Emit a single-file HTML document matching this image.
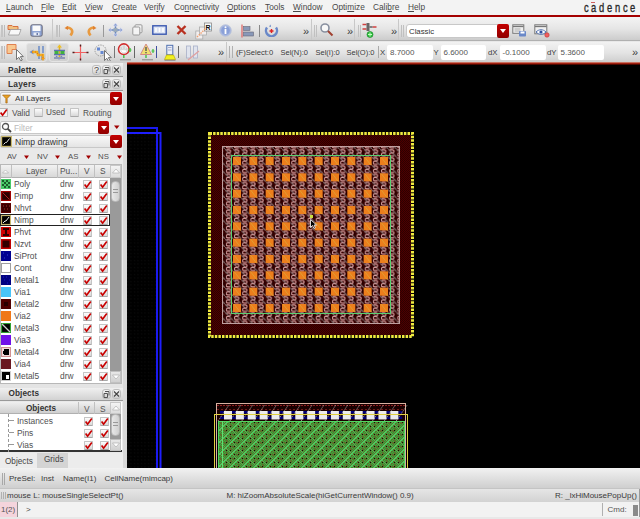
<!DOCTYPE html>
<html><head><meta charset="utf-8">
<style>
*{margin:0;padding:0;box-sizing:border-box}
html,body{width:640px;height:519px;overflow:hidden;background:#e8e8e8;font-family:"Liberation Sans",sans-serif;color:#333}
.a{position:absolute}
.t{position:absolute;white-space:pre;line-height:1}
#menu{left:0;top:0;width:640px;height:15px;background:#f3f3f3}
#menu .t{font-size:8.3px;top:3px;color:#484848}
#menu u{text-decoration-thickness:1px;text-underline-offset:1px}
#redl{left:0;top:15px;width:640px;height:2px;background:#a40000}
.tb{background:linear-gradient(#f4f4f4,#e6e6e6 40%,#d4d4d4)}
.grip{position:absolute;width:1px;background:#a8a8a8}
.sep{position:absolute;width:1px;background:#777}
.fld{position:absolute;background:#fff;border-radius:2px}
.rbtn{position:absolute;background:linear-gradient(#c40000,#900000);border-radius:2px}
.rbtn:after{content:"";position:absolute;left:50%;top:50%;margin:-2px 0 0 -3px;border-left:3px solid transparent;border-right:3px solid transparent;border-top:4px solid #fff}
.chev{position:absolute;font-size:11px;line-height:1;color:#404040;font-weight:normal}
.hdr{position:absolute;background:linear-gradient(#f0f0f0,#d2d2d2);border-bottom:1px solid #9a9a9a}
.hb{position:absolute;width:9px;height:10px;border-radius:3px;background:linear-gradient(#f4f4f4,#d0d0d0);border:1px solid #bcbcbc;font-size:8px;line-height:8px;text-align:center;color:#555}
.ck{position:absolute;width:9px;height:9px;background:linear-gradient(#fdfdfd,#d8d8d8);border:1px solid #c4c4c4;border-bottom-color:#a8a8a8;border-radius:1px}
.ck svg{position:absolute;left:-1px;top:-1px}
.lt{font-size:8.4px;color:#505050}
</style></head><body>
<!-- MENU -->
<div id="menu" class="a">
<span class="t" style="left:6px"><u>L</u>aunch</span>
<span class="t" style="left:41px"><u>F</u>ile</span>
<span class="t" style="left:62px"><u>E</u>dit</span>
<span class="t" style="left:85px"><u>V</u>iew</span>
<span class="t" style="left:112px"><u>C</u>reate</span>
<span class="t" style="left:144px">Ver<u>i</u>fy</span>
<span class="t" style="left:174px">Co<u>n</u>nectivity</span>
<span class="t" style="left:227px"><u>O</u>ptions</span>
<span class="t" style="left:265px"><u>T</u>ools</span>
<span class="t" style="left:293px"><u>W</u>indow</span>
<span class="t" style="left:332px">Opti<u>m</u>ize</span>
<span class="t" style="left:373px">Cali<u>b</u>re</span>
<span class="t" style="left:408px"><u>H</u>elp</span>
<span class="t" style="left:583.5px;top:1px;font-size:13px;color:#282828;-webkit-text-stroke:0.35px #282828;transform:scaleX(0.72);transform-origin:0 0">c</span><span class="t" style="left:590.5px;top:1px;font-size:13px;color:#282828;-webkit-text-stroke:0.35px #282828;transform:scaleX(0.72);transform-origin:0 0">a</span><span class="t" style="left:598.5px;top:1px;font-size:13px;color:#282828;-webkit-text-stroke:0.35px #282828;transform:scaleX(0.72);transform-origin:0 0">d</span><span class="t" style="left:606.5px;top:1px;font-size:13px;color:#282828;-webkit-text-stroke:0.35px #282828;transform:scaleX(0.72);transform-origin:0 0">e</span><span class="t" style="left:614.5px;top:1px;font-size:13px;color:#282828;-webkit-text-stroke:0.35px #282828;transform:scaleX(0.72);transform-origin:0 0">n</span><span class="t" style="left:622.5px;top:1px;font-size:13px;color:#282828;-webkit-text-stroke:0.35px #282828;transform:scaleX(0.72);transform-origin:0 0">c</span><span class="t" style="left:629.5px;top:1px;font-size:13px;color:#282828;-webkit-text-stroke:0.35px #282828;transform:scaleX(0.72);transform-origin:0 0">e</span><div class="a" style="left:591px;top:2px;width:4px;height:1px;background:#d06060"></div>
</div>
<div id="redl" class="a"></div>

<!-- TOOLBAR 1 -->
<div class="a" style="left:0;top:17px;width:640px;height:24px;background:linear-gradient(#f4f4f4,#e6e6e6 50%,#cccccc);border-bottom:1px solid #b0b0b0"></div>
<div class="a" style="left:52px;top:19px;width:1px;height:21px;background:#c8c8c8"></div>
<div class="a" style="left:311px;top:19px;width:1px;height:21px;background:#c8c8c8"></div>
<div class="a" style="left:354px;top:19px;width:1px;height:21px;background:#c8c8c8"></div>
<div class="a" style="left:398px;top:19px;width:1px;height:21px;background:#c8c8c8"></div>
<div class="grip" style="left:1px;top:25px;height:12px;width:2px;background:#c4c4c4"></div><div class="grip" style="left:4px;top:25px;height:12px;width:1px;background:#bbb"></div>
<div class="grip" style="left:56px;top:25px;height:12px;width:2px;background:#c4c4c4"></div><div class="grip" style="left:59px;top:25px;height:12px;width:1px;background:#bbb"></div>
<div class="grip" style="left:314px;top:25px;height:12px;width:1px;background:#c0c0c0"></div><div class="grip" style="left:316px;top:25px;height:12px;width:1px;background:#c0c0c0"></div>
<div class="grip" style="left:358px;top:25px;height:12px;width:1px;background:#c0c0c0"></div><div class="grip" style="left:360px;top:25px;height:12px;width:1px;background:#c0c0c0"></div>
<div class="grip" style="left:401px;top:25px;height:12px;width:1px;background:#c0c0c0"></div><div class="grip" style="left:403px;top:25px;height:12px;width:1px;background:#c0c0c0"></div>
<!-- folder -->
<svg class="a" style="left:7px;top:23px" width="15" height="13"><path d="M1 2.5h4l1 1h5v3H1z" fill="#f0c080" stroke="#d87040" stroke-width="1"/><path d="M1.5 12L3.5 6.5H14L12 12z" fill="#f8f8f8" stroke="#999" stroke-width="0.8"/></svg>
<!-- save -->
<svg class="a" style="left:30px;top:24px" width="13" height="13"><rect x="0.8" y="0.8" width="11.4" height="11.4" rx="1.5" fill="#8ea4d4" stroke="#6a6a78" stroke-width="1"/><rect x="2.5" y="1.5" width="8" height="5.5" fill="#fafafa"/><rect x="3.5" y="8.5" width="6" height="3" fill="#e8ecf4"/><rect x="6.5" y="9" width="1.5" height="2" fill="#6a7aa8"/></svg>
<!-- undo redo -->
<svg class="a" style="left:64px;top:26px" width="11" height="11"><path d="M2.5 1.5 C8 2 10 5 6.5 9.5" stroke="#e89a40" stroke-width="2.6" fill="none"/><path d="M0.5 2L4 0V4z" fill="#e08030"/></svg>
<svg class="a" style="left:86px;top:26px" width="11" height="11"><path d="M8.5 1.5 C3 2 1 5 4.5 9.5" stroke="#e89a40" stroke-width="2.6" fill="none"/><path d="M10.5 2L7 0V4z" fill="#e08030"/></svg>
<div class="sep" style="left:103px;top:25px;height:12px;background:#999"></div>
<!-- move -->
<svg class="a" style="left:108px;top:23px" width="15" height="14"><path d="M7.5 1V13M1 7H14" stroke="#6a88c0" stroke-width="1.6"/><path d="M7.5 0L5 3h5zM7.5 14L5 11h5zM0 7l3-2.5v5zM15 7l-3-2.5v5z" fill="#8aa0d0" stroke="#e8e8f8" stroke-width="0.6"/><rect x="5.5" y="5" width="4" height="4" fill="#9ab"/></svg>
<!-- copy -->
<svg class="a" style="left:132px;top:24px" width="11" height="12"><rect x="3" y="0.8" width="7" height="8" rx="1" fill="#f4f4f4" stroke="#999"/><rect x="0.8" y="3" width="7" height="8" rx="1" fill="#f4f4f4" stroke="#999"/></svg>
<!-- stretch -->
<svg class="a" style="left:152px;top:25px" width="15" height="10"><rect x="0.8" y="0.8" width="13.4" height="8.4" fill="#dde4f4" stroke="#3a58b0" stroke-width="1.4"/><path d="M4 3v4M7.5 3v4M11 3v4" stroke="#fff" stroke-width="1.5"/></svg>
<!-- red X -->
<svg class="a" style="left:176px;top:25px" width="11" height="10"><path d="M1.5 1L9.5 9M9.5 1L1.5 9" stroke="#b83020" stroke-width="2.4"/></svg>
<!-- stack -->
<svg class="a" style="left:195px;top:22px" width="18" height="18"><rect x="0.8" y="9" width="7" height="8" fill="#f2eeee" stroke="#aaa" stroke-width="0.8"/><rect x="4.5" y="5" width="7" height="8" fill="#f2eeee" stroke="#aaa" stroke-width="0.8"/><rect x="9.5" y="1" width="7" height="8" fill="#f8f8f8" stroke="#888" stroke-width="0.8"/><text x="10.5" y="8" font-size="7" font-weight="bold" fill="#111" font-family="Liberation Sans">R</text><path d="M2 15L11 6" stroke="#f0a070" stroke-width="1.4" stroke-dasharray="1.5 1"/></svg>
<!-- info -->
<svg class="a" style="left:219px;top:24px" width="13" height="13"><circle cx="6.5" cy="6.5" r="5.8" fill="#a8b8e0" stroke="#b8c0d8" stroke-width="0.8"/><circle cx="6.5" cy="6.5" r="4.3" fill="#8aa0d8"/><rect x="5.6" y="5" width="1.8" height="5" fill="#fff"/><circle cx="6.5" cy="3.3" r="1" fill="#fff"/></svg>
<!-- align -->
<svg class="a" style="left:241px;top:24px" width="13" height="14"><path d="M1 0.5V13.5" stroke="#e06060" stroke-width="1.2"/><rect x="2.5" y="2.5" width="6.5" height="4" fill="#8898b8" stroke="#667" stroke-width="0.6"/><rect x="2.5" y="8" width="10" height="4" fill="#8898b8" stroke="#667" stroke-width="0.6"/></svg>
<div class="sep" style="left:259px;top:25px;height:12px;background:#888"></div>
<!-- refresh -->
<svg class="a" style="left:264px;top:24px" width="15" height="13"><path d="M3 3.5A5.5 5.5 0 1 0 12 3.5" stroke="#6a88c8" stroke-width="2.4" fill="none"/><path d="M5 2.5l1.5-2 .5 2.5z" fill="#6a88c8"/><path d="M7.5 5v4M5.5 7h4" stroke="#e02020" stroke-width="1.4"/></svg>
<span class="chev" style="left:303px;top:26px">»</span>
<!-- zoom -->
<svg class="a" style="left:320px;top:23px" width="14" height="14"><circle cx="5" cy="5" r="4" fill="#f8f8f8" stroke="#8890a0" stroke-width="1.6"/><path d="M8 8L12.5 12.5" stroke="#a04030" stroke-width="2"/></svg>
<span class="chev" style="left:347px;top:26px">»</span>
<!-- netlist -->
<svg class="a" style="left:362px;top:22px" width="16" height="16"><path d="M0.5 2.5h4M0.5 7h4M10.5 5h4" stroke="#d04040" stroke-width="1.6"/><rect x="4.5" y="1" width="3" height="8" fill="#666"/><path d="M7.5 5h3" stroke="#555" stroke-width="1.4"/><circle cx="8" cy="12.5" r="3" fill="#30c040" stroke="#108020" stroke-width="0.6"/><path d="M8 10.5v4M6 12.5h4" stroke="#c0ffc0" stroke-width="1"/></svg>
<span class="chev" style="left:391px;top:26px">»</span>
<!-- combo classic -->
<div class="a" style="left:406px;top:24px;width:103px;height:14px;background:#fff;border:1px solid #c8c8c8;border-radius:3px"></div>
<span class="t" style="left:409px;top:27.5px;font-size:7.8px;color:#333">Classic</span>
<div class="rbtn" style="left:497px;top:24px;width:12px;height:14px"></div>
<!-- icon A -->
<svg class="a" style="left:512px;top:24px" width="15" height="13"><rect x="0.8" y="0.8" width="11" height="8.5" fill="#f0f0f0" stroke="#777" stroke-width="1"/><path d="M1 2.5h10.5" stroke="#777" stroke-width="1.3"/><path d="M2.5 5h6M2.5 7h6" stroke="#999" stroke-width="0.8"/><rect x="7" y="7" width="7" height="5.5" rx="0.8" fill="#6a88c8"/><rect x="8.5" y="7.5" width="4" height="2" fill="#fff"/></svg>
<!-- icon B -->
<svg class="a" style="left:534px;top:24px" width="16" height="14"><rect x="0.8" y="0.8" width="12" height="9" fill="#f0f0f0" stroke="#777" stroke-width="1"/><path d="M1 2.5h11.5" stroke="#777" stroke-width="1.3"/><path d="M2 8C5 5 9 5 12 8C9 11 5 11 2 8z" fill="#fff" stroke="#5070b0" stroke-width="1"/><circle cx="7" cy="8" r="1.6" fill="#3050a0"/><circle cx="13" cy="11" r="2.2" fill="#f06060" stroke="#c03030" stroke-width="0.6"/></svg>

<!-- TOOLBAR 2 -->
<div class="a" style="left:0;top:42px;width:640px;height:21px;background:linear-gradient(#f2f2f2,#e4e4e4 50%,#cccccc)"></div>
<div class="a" style="left:226px;top:42px;width:1px;height:20px;background:#c8c8c8"></div>
<div class="grip" style="left:1px;top:46px;height:13px;width:2px;background:#c4c4c4"></div><div class="grip" style="left:4px;top:46px;height:13px;width:1px;background:#bbb"></div>
<div class="grip" style="left:229px;top:46px;height:12px;width:1px;background:#b0b0b0"></div><div class="grip" style="left:232px;top:46px;height:12px;width:1px;background:#b0b0b0"></div>
<!-- select -->
<svg class="a" style="left:6px;top:43px" width="18" height="18"><path d="M1 1.5h9v5h-4v4h-5z" fill="#f8c890" stroke="#e08050" stroke-width="1"/><path d="M10.5 6.5v10l2.3-2.2 2 3.5 1.5-.8-2-3.4h3z" fill="#fff" stroke="#555" stroke-width="0.8"/></svg>
<div class="a" style="left:26px;top:43px;width:21px;height:19px;background:linear-gradient(#dadada,#cfcfcf);border:1px solid #e4e4e4;border-radius:3px"></div>
<div class="a" style="left:49px;top:43px;width:20px;height:19px;background:linear-gradient(#dadada,#cfcfcf);border:1px solid #e4e4e4;border-radius:3px"></div>
<svg class="a" style="left:29px;top:45px" width="17" height="16"><path d="M10 1v7M14 1v7M10 8v6M13 9v6" stroke="#7090c8" stroke-width="1.6"/><path d="M0.5 7l4-2.5v5z" fill="#7090c8"/><path d="M3 7h5l1 3h5v4" stroke="#f0b020" stroke-width="2.4" fill="none"/><path d="M3 7h5l1 3h5v4" stroke="#e05020" stroke-width="0.8" stroke-dasharray="1 2" fill="none"/><path d="M12 13l2 3 2-3z" fill="#f0a020"/></svg>
<svg class="a" style="left:53px;top:44px" width="13" height="17"><path d="M6.5 0.5L4 3.5h5z" fill="#f0c020"/><path d="M6.5 3v12" stroke="#e0b020" stroke-width="1.6"/><path d="M1 6.5h11M1 10.5h11" stroke="#6070b0" stroke-width="1.4"/><rect x="1.5" y="7" width="4" height="3" fill="#40b040"/><rect x="7.5" y="7" width="4" height="3" fill="#40b040"/><path d="M3 12l3 3 3-3" stroke="#7080c0" stroke-width="1.2" fill="none"/><rect x="1" y="13" width="11" height="2" fill="#9098b8"/></svg>
<!-- crosshair -->
<svg class="a" style="left:72px;top:44px" width="17" height="17"><path d="M1 8.5H16M8.5 1V16" stroke="#f06060" stroke-width="1.2"/><path d="M0.5 8.5H2.5M14.5 8.5H16.5M8.5 0.5V2.5M8.5 14.5V16.5" stroke="#502020" stroke-width="1.4"/></svg>
<!-- selection circle -->
<svg class="a" style="left:94px;top:44px" width="18" height="17"><circle cx="6.5" cy="6.5" r="5.5" fill="none" stroke="#999" stroke-width="1" stroke-dasharray="1.5 1"/><rect x="3" y="3.5" width="3" height="3" fill="#6688d0"/><rect x="6.5" y="7" width="3" height="3" fill="#6688d0"/><path d="M10.5 6.5v10l2.3-2.2 2 3.5 1.5-.8-2-3.4h3z" fill="#fff" stroke="#555" stroke-width="0.8"/></svg>
<div class="sep" style="left:114px;top:46px;height:12px;background:#777"></div>
<!-- no entry -->
<svg class="a" style="left:117px;top:43px" width="16" height="18"><circle cx="6.8" cy="6.2" r="5.3" fill="#fff" stroke="#d03030" stroke-width="1.6"/><path d="M3.8 6.5V4.8M5.4 6V3.2M7 6V2.8M8.6 6V3.4M10 7V5.4" stroke="#b8b8b8" stroke-width="1.5" stroke-linecap="round"/><path d="M3.8 6.5V4.8M5.4 6V3.2M7 6V2.8M8.6 6V3.4M10 7V5.4" stroke="#fff" stroke-width="0.7" stroke-linecap="round"/><path d="M3.5 6.5Q4 10 7 10Q10 10 10 7z" fill="#fff" stroke="#c0c0c0" stroke-width="0.5"/><path d="M13 5v4" stroke="#40c040" stroke-width="1.4"/><path d="M11.5 7h3" stroke="#40c040" stroke-width="1"/><path d="M6.8 12v3" stroke="#40c040" stroke-width="1.4"/><path d="M3 16.8h11" stroke="#888" stroke-width="1"/></svg>
<div class="sep" style="left:134px;top:46px;height:12px;background:#666"></div>
<!-- warning -->
<svg class="a" style="left:140px;top:43px" width="16" height="18"><path d="M6 1L11.5 11.5H0.5z" fill="#f0e070" stroke="#d08080" stroke-width="0.9"/><rect x="5.3" y="4" width="1.4" height="4" fill="#555"/><rect x="5.3" y="9" width="1.4" height="1.3" fill="#555"/><path d="M13 6v4M11.5 8h3" stroke="#40c040" stroke-width="1.2"/><path d="M6 12v3" stroke="#40c040" stroke-width="1.4"/><path d="M2 16.8h11" stroke="#888" stroke-width="1"/></svg>
<div class="sep" style="left:156px;top:46px;height:12px;background:#4050a0"></div>
<!-- yellow device -->
<svg class="a" style="left:164px;top:44px" width="12" height="17"><rect x="2.8" y="1.3" width="6" height="9.5" fill="#e8eef8" stroke="#5070b0" stroke-width="1"/><path d="M4 3.5h3.5M4 6h3.5" stroke="#99b" stroke-width="0.8"/><path d="M2.5 11h7l2 4.5H0.5z" fill="#f0f020" stroke="#c0b000" stroke-width="0.7"/><path d="M0.5 16.3h11" stroke="#888" stroke-width="0.9"/></svg>
<div class="sep" style="left:178px;top:46px;height:12px;background:#666"></div>
<!-- grayed -->
<svg class="a" style="left:185px;top:45px" width="15" height="16"><rect x="1.5" y="1" width="4" height="12" fill="#e0e4ee" stroke="#a8b0c8" stroke-width="0.8"/><rect x="8.5" y="1" width="4" height="12" fill="#e0e4ee" stroke="#a8b0c8" stroke-width="0.8"/><path d="M3 15L14 6" stroke="#e0a0a0" stroke-width="1.3"/></svg>
<span class="chev" style="left:218px;top:47px">»</span>
<span class="t" style="left:236px;top:49px;font-size:7.6px;color:#3a3a3a">(F)Select:0</span>
<span class="t" style="left:280.5px;top:49px;font-size:7.5px;color:#3a3a3a">Sel(N):0</span>
<span class="t" style="left:315.5px;top:49px;font-size:7.5px;color:#3a3a3a">Sel(I):0</span>
<span class="t" style="left:346.5px;top:49px;font-size:7.5px;color:#3a3a3a">Sel(O):0</span>
<div class="sep" style="left:378px;top:46px;height:12px;background:#aaa"></div>
<span class="t" style="left:380px;top:49px;font-size:7.8px;color:#3a3a3a">X</span>
<div class="fld" style="left:387px;top:45px;width:46px;height:15px"></div>
<span class="t" style="left:390px;top:49px;font-size:8px;color:#555">8.7000</span>
<span class="t" style="left:433.5px;top:49px;font-size:7.8px;color:#3a3a3a">Y</span>
<div class="fld" style="left:441px;top:45px;width:45px;height:15px"></div>
<span class="t" style="left:443.5px;top:49px;font-size:8px;color:#555">6.6000</span>
<span class="t" style="left:488px;top:49px;font-size:7.8px;color:#3a3a3a">dX</span>
<div class="fld" style="left:499.5px;top:45px;width:46px;height:15px"></div>
<span class="t" style="left:502.5px;top:49px;font-size:8px;color:#555">-0.1000</span>
<span class="t" style="left:547px;top:49px;font-size:7.8px;color:#3a3a3a">dY</span>
<div class="fld" style="left:558px;top:45px;width:46px;height:15px"></div>
<span class="t" style="left:560.5px;top:49px;font-size:8px;color:#555">5.3600</span>
<span class="chev" style="left:632px;top:47px">»</span>


<div class="a" style="left:127px;top:62px;width:513px;height:1px;background:#c87060"></div>
<!-- LEFT PANEL -->
<div class="a" style="left:0;top:63px;width:123px;height:390px;background:#e9e9e9"></div>
<div class="a" style="left:123px;top:63px;width:4px;height:405px;background:#d8d8d8"></div>

<!-- PALETTE -->
<div class="hdr" style="left:0;top:63px;width:123px;height:14px"></div>
<span class="t" style="left:8px;top:66px;font-size:8.4px;font-weight:bold;color:#333;letter-spacing:0.1px">Palette</span>
<div class="hb" style="left:92px;top:65px;font-size:9px;color:#444">?</div>
<div class="hb" style="left:102px;top:65px"><svg width="7" height="8" style="position:absolute;left:0;top:0"><path d="M2 1.5h4v4M1 3.5h3.5v4h-3.5z" stroke="#555" fill="none" stroke-width="1"/></svg></div>
<div class="hb" style="left:112px;top:65px"><svg width="7" height="8" style="position:absolute;left:0;top:0"><path d="M1 1.5L6 6.5M6 1.5L1 6.5" stroke="#444" stroke-width="1.1"/></svg></div>
<div class="hdr" style="left:0;top:78px;width:123px;height:13px"></div>
<span class="t" style="left:8px;top:80px;font-size:8.4px;font-weight:bold;color:#333;letter-spacing:0.2px">Layers</span>
<div class="hb" style="left:102px;top:79px"><svg width="7" height="8" style="position:absolute;left:0;top:0"><path d="M2 1.5h4v4M1 3.5h3.5v4h-3.5z" stroke="#555" fill="none" stroke-width="1"/></svg></div>
<div class="hb" style="left:112px;top:79px"><svg width="7" height="8" style="position:absolute;left:0;top:0"><path d="M1 1.5L6 6.5M6 1.5L1 6.5" stroke="#444" stroke-width="1.1"/></svg></div>
<!-- all layers combo -->
<div class="a" style="left:0;top:92px;width:122px;height:13px;background:linear-gradient(#f8f8f8,#e4e4e4);border:1px solid #c8c8c8;border-radius:2px"></div>
<svg class="a" style="left:2px;top:94px" width="9" height="10"><path d="M0.5 1H8.5L5.2 4.5V9H3.8V4.5Z" fill="#e8a020" stroke="#a06010" stroke-width="0.6"/></svg>
<span class="t" style="left:15px;top:95px;font-size:8.1px;color:#333">All Layers</span>
<div class="rbtn" style="left:110px;top:92px;width:12px;height:13px"></div>
<!-- valid used routing -->
<svg class="a" style="left:0;top:108px" width="9" height="9"><rect x="-1" y="0.5" width="8.5" height="8" fill="#f4f4f4" stroke="#b8b8b8"/><path d="M0.6 4.6L2.6 7.2L6.8 1.6" stroke="#c80000" stroke-width="1.7" fill="none"/></svg>
<span class="t" style="left:12px;top:109px;font-size:8.4px;color:#505050">Valid</span>
<div class="ck" style="left:34px;top:108px"></div>
<span class="t" style="left:46px;top:109px;font-size:8.2px;color:#505050">Used</span>
<div class="ck" style="left:70px;top:108px"></div>
<span class="t" style="left:83px;top:109px;font-size:8.3px;color:#505050">Routing</span>
<!-- filter -->
<div class="a" style="left:0;top:121px;width:109px;height:13px;background:#fff;border:1px solid #c8c8c8;border-radius:2px"></div>
<svg class="a" style="left:1px;top:122px" width="11" height="11"><circle cx="4.5" cy="4.5" r="3" stroke="#555" stroke-width="1.3" fill="none"/><path d="M6.8 6.8L10 10" stroke="#444" stroke-width="1.8"/></svg>
<span class="t" style="left:14px;top:124px;font-size:8.4px;color:#bbb">Filter</span>
<div class="rbtn" style="left:98px;top:121px;width:11px;height:13px"></div>
<svg class="a" style="left:114px;top:125px" width="6" height="5"><path d="M0 0.5H5.5L2.75 4Z" fill="#a00000"/></svg>
<!-- Nimp drawing -->
<div class="a" style="left:0;top:135px;width:122px;height:13px;background:linear-gradient(#f8f8f8,#e4e4e4);border:1px solid #c8c8c8;border-radius:2px"></div>
<svg class="a" style="left:1px;top:136px" width="11" height="11"><rect x="0.6" y="0.6" width="9.8" height="9.8" fill="#000" stroke="#c8b870" stroke-width="1.2"/><path d="M2.5 8.5L4.5 6.5H5.5L8.5 2.5" stroke="#e8e8e8" stroke-width="1"/></svg>
<span class="t" style="left:15px;top:138px;font-size:8.6px;color:#333">Nimp drawing</span>
<div class="rbtn" style="left:110px;top:135px;width:12px;height:13px"></div>
<!-- AV NV AS NS -->
<span class="t" style="left:7px;top:153px;font-size:7.8px;color:#505050">AV</span>
<svg class="a" style="left:24px;top:155px" width="6" height="5"><path d="M0 0.5H5L2.5 4Z" fill="#a00000"/></svg>
<span class="t" style="left:37px;top:153px;font-size:7.8px;color:#505050">NV</span>
<svg class="a" style="left:55px;top:155px" width="6" height="5"><path d="M0 0.5H5L2.5 4Z" fill="#a00000"/></svg>
<span class="t" style="left:68px;top:153px;font-size:7.8px;color:#505050">AS</span>
<svg class="a" style="left:86px;top:155px" width="6" height="5"><path d="M0 0.5H5L2.5 4Z" fill="#a00000"/></svg>
<span class="t" style="left:98px;top:153px;font-size:7.8px;color:#505050">NS</span>
<svg class="a" style="left:117px;top:155px" width="6" height="5"><path d="M0 0.5H5L2.5 4Z" fill="#a00000"/></svg>
<!-- layer table -->
<div class="a" style="left:0;top:164px;width:122px;height:220px;background:#fff;border:1px solid #b8b8b8"></div>
<div class="a" style="left:1px;top:165px;width:109px;height:13px;background:linear-gradient(#f2f2f2,#d8d8d8);border-bottom:1px solid #b0b0b0"></div>
<svg class="a" style="left:2px;top:169px" width="7" height="5"><path d="M0.5 4H6.5L3.5 1Z" fill="#fff" stroke="#aaa" stroke-width="0.6"/></svg>
<div class="a" style="left:11px;top:165px;width:1px;height:13px;background:#c0c0c0"></div>
<span class="t lt" style="left:26px;top:167px">Layer</span>
<div class="a" style="left:57px;top:165px;width:1px;height:13px;background:#c0c0c0"></div>
<span class="t lt" style="left:60px;top:167px">Pu...</span>
<div class="a" style="left:78px;top:165px;width:1px;height:13px;background:#c0c0c0"></div>
<span class="t lt" style="left:84px;top:167px">V</span>
<div class="a" style="left:94px;top:165px;width:1px;height:13px;background:#c0c0c0"></div>
<span class="t lt" style="left:100px;top:167px">S</span>
<!-- scrollbar -->
<div class="a" style="left:110px;top:165px;width:11px;height:218px;background:#9a9a9a"></div>
<div class="a" style="left:110px;top:165px;width:11px;height:13px;background:linear-gradient(#f4f4f4,#dcdcdc);border:1px solid #c8c8c8"></div>
<svg class="a" style="left:112px;top:168px" width="8" height="6"><path d="M0.5 5H7.5L4 1Z" fill="#fff" stroke="#b0b0b0" stroke-width="0.7"/></svg>
<div class="a" style="left:111px;top:181px;width:9px;height:21px;background:linear-gradient(90deg,#e8e8e8,#d0d0d0);border:1px solid #b8b8b8;border-radius:4px"></div>
<div class="a" style="left:113px;top:189px;width:5px;height:1px;background:#999"></div>
<div class="a" style="left:113px;top:192px;width:5px;height:1px;background:#999"></div>
<div class="a" style="left:110px;top:371px;width:11px;height:12px;background:linear-gradient(#e8e8e8,#d0d0d0);border:1px solid #c0c0c0"></div>
<svg class="a" style="left:112px;top:374px" width="8" height="6"><path d="M0.5 1H7.5L4 5Z" fill="#fff" stroke="#b0b0b0" stroke-width="0.7"/></svg>
<!-- selected row border -->
<div class="a" style="left:0;top:214px;width:110px;height:12px;border:1px solid #222"></div>
<svg class="a" style="left:1px;top:179px" width="10" height="10"><rect width="10" height="10" fill="#48c868"/><path d="M1 1h2v2h-2zM5 1h2v2h-2zM3 3h2v2h-2zM7 3h2v2h-2zM1 5h2v2h-2zM5 5h2v2h-2zM3 7h2v2h-2zM7 7h2v2h-2z" fill="#1a5a2a"/></svg><span class="t lt" style="left:14px;top:180px">Poly</span><span class="t lt" style="left:60px;top:180px">drw</span><div class="ck" style="left:83px;top:180px"><svg width="9" height="9" viewBox="0 0 9 9"><path d="M1.6 4.6L3.6 7.2L7.8 1.6" stroke="#c80000" stroke-width="1.7" fill="none"/></svg></div><div class="ck" style="left:99px;top:180px"><svg width="9" height="9" viewBox="0 0 9 9"><path d="M1.6 4.6L3.6 7.2L7.8 1.6" stroke="#c80000" stroke-width="1.7" fill="none"/></svg></div><svg class="a" style="left:1px;top:191px" width="10" height="10"><rect x="0.6" y="0.6" width="8.8" height="8.8" fill="#280000" stroke="#a00000" stroke-width="1.2"/><path d="M1.5 1.5L8.5 8.5" stroke="#b02020" stroke-width="1"/></svg><span class="t lt" style="left:14px;top:192px">Pimp</span><span class="t lt" style="left:60px;top:192px">drw</span><div class="ck" style="left:83px;top:192px"><svg width="9" height="9" viewBox="0 0 9 9"><path d="M1.6 4.6L3.6 7.2L7.8 1.6" stroke="#c80000" stroke-width="1.7" fill="none"/></svg></div><div class="ck" style="left:99px;top:192px"><svg width="9" height="9" viewBox="0 0 9 9"><path d="M1.6 4.6L3.6 7.2L7.8 1.6" stroke="#c80000" stroke-width="1.7" fill="none"/></svg></div><svg class="a" style="left:1px;top:203px" width="10" height="10"><rect width="10" height="10" fill="#3a0000" stroke="#7a0000" stroke-width="1"/><path d="M2 3h1M5 3h1M8 3h1M3 6h1M6 6h1" stroke="#a03030"/></svg><span class="t lt" style="left:14px;top:204px">Nhvt</span><span class="t lt" style="left:60px;top:204px">drw</span><div class="ck" style="left:83px;top:204px"><svg width="9" height="9" viewBox="0 0 9 9"><path d="M1.6 4.6L3.6 7.2L7.8 1.6" stroke="#c80000" stroke-width="1.7" fill="none"/></svg></div><div class="ck" style="left:99px;top:204px"><svg width="9" height="9" viewBox="0 0 9 9"><path d="M1.6 4.6L3.6 7.2L7.8 1.6" stroke="#c80000" stroke-width="1.7" fill="none"/></svg></div><svg class="a" style="left:1px;top:215px" width="10" height="10"><rect x="0.5" y="0.5" width="9" height="9" fill="#000" stroke="#c8b870" stroke-width="1.2"/><path d="M2 8L4 6H5L8 2" stroke="#e8e8e8" stroke-width="1"/></svg><span class="t lt" style="left:14px;top:216px">Nimp</span><span class="t lt" style="left:60px;top:216px">drw</span><div class="ck" style="left:83px;top:216px"><svg width="9" height="9" viewBox="0 0 9 9"><path d="M1.6 4.6L3.6 7.2L7.8 1.6" stroke="#c80000" stroke-width="1.7" fill="none"/></svg></div><div class="ck" style="left:99px;top:216px"><svg width="9" height="9" viewBox="0 0 9 9"><path d="M1.6 4.6L3.6 7.2L7.8 1.6" stroke="#c80000" stroke-width="1.7" fill="none"/></svg></div><svg class="a" style="left:1px;top:227px" width="10" height="10"><rect width="10" height="10" fill="#d00000"/><path d="M2 1h6v2h-2v4h2v2h-6v-2h2v-4h-2z" fill="#300000"/></svg><span class="t lt" style="left:14px;top:228px">Phvt</span><span class="t lt" style="left:60px;top:228px">drw</span><div class="ck" style="left:83px;top:228px"><svg width="9" height="9" viewBox="0 0 9 9"><path d="M1.6 4.6L3.6 7.2L7.8 1.6" stroke="#c80000" stroke-width="1.7" fill="none"/></svg></div><div class="ck" style="left:99px;top:228px"><svg width="9" height="9" viewBox="0 0 9 9"><path d="M1.6 4.6L3.6 7.2L7.8 1.6" stroke="#c80000" stroke-width="1.7" fill="none"/></svg></div><svg class="a" style="left:1px;top:239px" width="10" height="10"><rect width="10" height="10" fill="#c00000"/><rect x="1.5" y="1.5" width="7" height="7" fill="#300000"/></svg><span class="t lt" style="left:14px;top:240px">Nzvt</span><span class="t lt" style="left:60px;top:240px">drw</span><div class="ck" style="left:83px;top:240px"><svg width="9" height="9" viewBox="0 0 9 9"><path d="M1.6 4.6L3.6 7.2L7.8 1.6" stroke="#c80000" stroke-width="1.7" fill="none"/></svg></div><div class="ck" style="left:99px;top:240px"><svg width="9" height="9" viewBox="0 0 9 9"><path d="M1.6 4.6L3.6 7.2L7.8 1.6" stroke="#c80000" stroke-width="1.7" fill="none"/></svg></div><svg class="a" style="left:1px;top:251px" width="10" height="10"><rect width="10" height="10" fill="#000090"/><path d="M2 2h1M6 4h1M3 7h1" stroke="#3040d0"/></svg><span class="t lt" style="left:14px;top:252px">SiProt</span><span class="t lt" style="left:60px;top:252px">drw</span><div class="ck" style="left:83px;top:252px"><svg width="9" height="9" viewBox="0 0 9 9"><path d="M1.6 4.6L3.6 7.2L7.8 1.6" stroke="#c80000" stroke-width="1.7" fill="none"/></svg></div><div class="ck" style="left:99px;top:252px"><svg width="9" height="9" viewBox="0 0 9 9"><path d="M1.6 4.6L3.6 7.2L7.8 1.6" stroke="#c80000" stroke-width="1.7" fill="none"/></svg></div><svg class="a" style="left:1px;top:263px" width="10" height="10"><rect x="0.5" y="0.5" width="9" height="9" fill="#fff" stroke="#a0a0a0"/></svg><span class="t lt" style="left:14px;top:264px">Cont</span><span class="t lt" style="left:60px;top:264px">drw</span><div class="ck" style="left:83px;top:264px"><svg width="9" height="9" viewBox="0 0 9 9"><path d="M1.6 4.6L3.6 7.2L7.8 1.6" stroke="#c80000" stroke-width="1.7" fill="none"/></svg></div><div class="ck" style="left:99px;top:264px"><svg width="9" height="9" viewBox="0 0 9 9"><path d="M1.6 4.6L3.6 7.2L7.8 1.6" stroke="#c80000" stroke-width="1.7" fill="none"/></svg></div><svg class="a" style="left:1px;top:275px" width="10" height="10"><rect width="10" height="10" fill="#000080"/><path d="M2 2h1M5 2h1M8 5h1M3 5h1M6 8h1" stroke="#1818c8"/></svg><span class="t lt" style="left:14px;top:276px">Metal1</span><span class="t lt" style="left:60px;top:276px">drw</span><div class="ck" style="left:83px;top:276px"><svg width="9" height="9" viewBox="0 0 9 9"><path d="M1.6 4.6L3.6 7.2L7.8 1.6" stroke="#c80000" stroke-width="1.7" fill="none"/></svg></div><div class="ck" style="left:99px;top:276px"><svg width="9" height="9" viewBox="0 0 9 9"><path d="M1.6 4.6L3.6 7.2L7.8 1.6" stroke="#c80000" stroke-width="1.7" fill="none"/></svg></div><svg class="a" style="left:1px;top:287px" width="10" height="10"><rect width="10" height="10" fill="#48c4f8"/></svg><span class="t lt" style="left:14px;top:288px">Via1</span><span class="t lt" style="left:60px;top:288px">drw</span><div class="ck" style="left:83px;top:288px"><svg width="9" height="9" viewBox="0 0 9 9"><path d="M1.6 4.6L3.6 7.2L7.8 1.6" stroke="#c80000" stroke-width="1.7" fill="none"/></svg></div><div class="ck" style="left:99px;top:288px"><svg width="9" height="9" viewBox="0 0 9 9"><path d="M1.6 4.6L3.6 7.2L7.8 1.6" stroke="#c80000" stroke-width="1.7" fill="none"/></svg></div><svg class="a" style="left:1px;top:299px" width="10" height="10"><rect width="10" height="10" fill="#500000"/><path d="M3 3h4v4h-4z" fill="#280000"/></svg><span class="t lt" style="left:14px;top:300px">Metal2</span><span class="t lt" style="left:60px;top:300px">drw</span><div class="ck" style="left:83px;top:300px"><svg width="9" height="9" viewBox="0 0 9 9"><path d="M1.6 4.6L3.6 7.2L7.8 1.6" stroke="#c80000" stroke-width="1.7" fill="none"/></svg></div><div class="ck" style="left:99px;top:300px"><svg width="9" height="9" viewBox="0 0 9 9"><path d="M1.6 4.6L3.6 7.2L7.8 1.6" stroke="#c80000" stroke-width="1.7" fill="none"/></svg></div><svg class="a" style="left:1px;top:311px" width="10" height="10"><rect width="10" height="10" fill="#f07818"/></svg><span class="t lt" style="left:14px;top:312px">Via2</span><span class="t lt" style="left:60px;top:312px">drw</span><div class="ck" style="left:83px;top:312px"><svg width="9" height="9" viewBox="0 0 9 9"><path d="M1.6 4.6L3.6 7.2L7.8 1.6" stroke="#c80000" stroke-width="1.7" fill="none"/></svg></div><div class="ck" style="left:99px;top:312px"><svg width="9" height="9" viewBox="0 0 9 9"><path d="M1.6 4.6L3.6 7.2L7.8 1.6" stroke="#c80000" stroke-width="1.7" fill="none"/></svg></div><svg class="a" style="left:1px;top:323px" width="10" height="10"><rect x="0.5" y="0.5" width="9" height="9" fill="#000" stroke="#30a030" stroke-width="1.2"/><path d="M1 1L9 9" stroke="#d0d0d0" stroke-width="1.2"/></svg><span class="t lt" style="left:14px;top:324px">Metal3</span><span class="t lt" style="left:60px;top:324px">drw</span><div class="ck" style="left:83px;top:324px"><svg width="9" height="9" viewBox="0 0 9 9"><path d="M1.6 4.6L3.6 7.2L7.8 1.6" stroke="#c80000" stroke-width="1.7" fill="none"/></svg></div><div class="ck" style="left:99px;top:324px"><svg width="9" height="9" viewBox="0 0 9 9"><path d="M1.6 4.6L3.6 7.2L7.8 1.6" stroke="#c80000" stroke-width="1.7" fill="none"/></svg></div><svg class="a" style="left:1px;top:335px" width="10" height="10"><rect width="10" height="10" fill="#7010e8"/></svg><span class="t lt" style="left:14px;top:336px">Via3</span><span class="t lt" style="left:60px;top:336px">drw</span><div class="ck" style="left:83px;top:336px"><svg width="9" height="9" viewBox="0 0 9 9"><path d="M1.6 4.6L3.6 7.2L7.8 1.6" stroke="#c80000" stroke-width="1.7" fill="none"/></svg></div><div class="ck" style="left:99px;top:336px"><svg width="9" height="9" viewBox="0 0 9 9"><path d="M1.6 4.6L3.6 7.2L7.8 1.6" stroke="#c80000" stroke-width="1.7" fill="none"/></svg></div><svg class="a" style="left:1px;top:347px" width="10" height="10"><rect x="0.5" y="0.5" width="9" height="9" fill="#f0d8d8" stroke="#d09090"/><rect x="3" y="2" width="5" height="6" fill="#000"/><rect x="2" y="4" width="2" height="3" fill="#000"/></svg><span class="t lt" style="left:14px;top:348px">Metal4</span><span class="t lt" style="left:60px;top:348px">drw</span><div class="ck" style="left:83px;top:348px"><svg width="9" height="9" viewBox="0 0 9 9"><path d="M1.6 4.6L3.6 7.2L7.8 1.6" stroke="#c80000" stroke-width="1.7" fill="none"/></svg></div><div class="ck" style="left:99px;top:348px"><svg width="9" height="9" viewBox="0 0 9 9"><path d="M1.6 4.6L3.6 7.2L7.8 1.6" stroke="#c80000" stroke-width="1.7" fill="none"/></svg></div><svg class="a" style="left:1px;top:359px" width="10" height="10"><rect width="10" height="10" fill="#6a1820"/></svg><span class="t lt" style="left:14px;top:360px">Via4</span><span class="t lt" style="left:60px;top:360px">drw</span><div class="ck" style="left:83px;top:360px"><svg width="9" height="9" viewBox="0 0 9 9"><path d="M1.6 4.6L3.6 7.2L7.8 1.6" stroke="#c80000" stroke-width="1.7" fill="none"/></svg></div><div class="ck" style="left:99px;top:360px"><svg width="9" height="9" viewBox="0 0 9 9"><path d="M1.6 4.6L3.6 7.2L7.8 1.6" stroke="#c80000" stroke-width="1.7" fill="none"/></svg></div><svg class="a" style="left:1px;top:371px" width="10" height="10"><rect width="10" height="10" fill="#000"/><rect x="0.5" y="0.5" width="9" height="9" fill="none" stroke="#d0d0d0"/><rect x="5" y="4" width="3" height="4" fill="#fff"/></svg><span class="t lt" style="left:14px;top:372px">Metal5</span><span class="t lt" style="left:60px;top:372px">drw</span><div class="ck" style="left:83px;top:372px"><svg width="9" height="9" viewBox="0 0 9 9"><path d="M1.6 4.6L3.6 7.2L7.8 1.6" stroke="#c80000" stroke-width="1.7" fill="none"/></svg></div><div class="ck" style="left:99px;top:372px"><svg width="9" height="9" viewBox="0 0 9 9"><path d="M1.6 4.6L3.6 7.2L7.8 1.6" stroke="#c80000" stroke-width="1.7" fill="none"/></svg></div>


<!-- CANVAS -->
<svg class="a" style="left:127px;top:63px" width="513" height="405" viewBox="127 63 513 405">
<defs>
<pattern id="dotg" width="3.5" height="3.5" patternUnits="userSpaceOnUse"><rect x="1" y="1" width="1" height="1" fill="#0e0e0e"/></pattern>
<pattern id="dred" width="2" height="2" patternUnits="userSpaceOnUse"><rect width="2" height="2" fill="#4c0000"/><rect width="1" height="1" fill="#2c0000"/><rect x="1" y="1" width="1" height="1" fill="#2c0000"/></pattern>
<pattern id="cell" x="225" y="149" width="8.1667" height="8.1667" patternUnits="userSpaceOnUse">
<rect width="9" height="9" fill="#380000"/>
<path d="M-1 -1L9.5 9.5" stroke="#786868" stroke-width="1.2"/>
<path d="M1.5 0.8h2.5q1.6 0 1.6 1.6t-1.6 1.6h-1.2q-1.6 0-1.6 1.6t1.6 1.6h2.8" stroke="#dca4a4" stroke-width="1.1" fill="none"/>
<rect x="6.5" y="3" width="1" height="1" fill="#000"/><rect x="0" y="5" width="1" height="1" fill="#000"/>
</pattern>
<pattern id="grn" width="12" height="12" patternUnits="userSpaceOnUse"><rect width="12" height="12" fill="#5c702c"/><rect x="0" y="0" width="1" height="1" fill="#50c860"/><rect x="1" y="0" width="1" height="1" fill="#50c860"/><rect x="2" y="0" width="1" height="1" fill="#30b440"/><rect x="4" y="0" width="1" height="1" fill="#30b440"/><rect x="6" y="0" width="1" height="1" fill="#48c058"/><rect x="8" y="0" width="1" height="1" fill="#30b440"/><rect x="10" y="0" width="1" height="1" fill="#30b440"/><rect x="0" y="1" width="1" height="1" fill="#50c860"/><rect x="3" y="1" width="1" height="1" fill="#30b440"/><rect x="5" y="1" width="1" height="1" fill="#30b440"/><rect x="7" y="1" width="1" height="1" fill="#48c058"/><rect x="9" y="1" width="1" height="1" fill="#30b440"/><rect x="11" y="1" width="1" height="1" fill="#50c860"/><rect x="0" y="2" width="1" height="1" fill="#30b440"/><rect x="2" y="2" width="1" height="1" fill="#0c1606"/><rect x="6" y="2" width="1" height="1" fill="#0c1606"/><rect x="8" y="2" width="1" height="1" fill="#48c058"/><rect x="10" y="2" width="1" height="1" fill="#50c860"/><rect x="11" y="2" width="1" height="1" fill="#50c860"/><rect x="1" y="3" width="1" height="1" fill="#30b440"/><rect x="3" y="3" width="1" height="1" fill="#30b440"/><rect x="7" y="3" width="1" height="1" fill="#30b440"/><rect x="9" y="3" width="1" height="1" fill="#50c860"/><rect x="10" y="3" width="1" height="1" fill="#50c860"/><rect x="0" y="4" width="1" height="1" fill="#30b440"/><rect x="4" y="4" width="1" height="1" fill="#30b440"/><rect x="6" y="4" width="1" height="1" fill="#30b440"/><rect x="8" y="4" width="1" height="1" fill="#50c860"/><rect x="9" y="4" width="1" height="1" fill="#50c860"/><rect x="10" y="4" width="1" height="1" fill="#48c058"/><rect x="1" y="5" width="1" height="1" fill="#30b440"/><rect x="5" y="5" width="1" height="1" fill="#30b440"/><rect x="7" y="5" width="1" height="1" fill="#50c860"/><rect x="8" y="5" width="1" height="1" fill="#50c860"/><rect x="11" y="5" width="1" height="1" fill="#48c058"/><rect x="0" y="6" width="1" height="1" fill="#48c058"/><rect x="2" y="6" width="1" height="1" fill="#0c1606"/><rect x="4" y="6" width="1" height="1" fill="#30b440"/><rect x="6" y="6" width="1" height="1" fill="#50c860"/><rect x="7" y="6" width="1" height="1" fill="#50c860"/><rect x="8" y="6" width="1" height="1" fill="#30b440"/><rect x="10" y="6" width="1" height="1" fill="#0c1606"/><rect x="1" y="7" width="1" height="1" fill="#48c058"/><rect x="3" y="7" width="1" height="1" fill="#30b440"/><rect x="5" y="7" width="1" height="1" fill="#50c860"/><rect x="6" y="7" width="1" height="1" fill="#50c860"/><rect x="9" y="7" width="1" height="1" fill="#30b440"/><rect x="11" y="7" width="1" height="1" fill="#30b440"/><rect x="0" y="8" width="1" height="1" fill="#30b440"/><rect x="2" y="8" width="1" height="1" fill="#48c058"/><rect x="4" y="8" width="1" height="1" fill="#50c860"/><rect x="5" y="8" width="1" height="1" fill="#50c860"/><rect x="6" y="8" width="1" height="1" fill="#30b440"/><rect x="8" y="8" width="1" height="1" fill="#30b440"/><rect x="1" y="9" width="1" height="1" fill="#30b440"/><rect x="3" y="9" width="1" height="1" fill="#50c860"/><rect x="4" y="9" width="1" height="1" fill="#50c860"/><rect x="7" y="9" width="1" height="1" fill="#30b440"/><rect x="9" y="9" width="1" height="1" fill="#30b440"/><rect x="0" y="10" width="1" height="1" fill="#30b440"/><rect x="2" y="10" width="1" height="1" fill="#50c860"/><rect x="3" y="10" width="1" height="1" fill="#50c860"/><rect x="4" y="10" width="1" height="1" fill="#48c058"/><rect x="6" y="10" width="1" height="1" fill="#0c1606"/><rect x="10" y="10" width="1" height="1" fill="#0c1606"/><rect x="1" y="11" width="1" height="1" fill="#50c860"/><rect x="2" y="11" width="1" height="1" fill="#50c860"/><rect x="5" y="11" width="1" height="1" fill="#48c058"/><rect x="7" y="11" width="1" height="1" fill="#30b440"/><rect x="11" y="11" width="1" height="1" fill="#30b440"/></pattern><pattern id="gstr" width="24" height="24" patternUnits="userSpaceOnUse"></pattern>
</defs>
<rect x="127" y="63" width="513" height="405" fill="#000"/>
<rect x="127" y="63" width="513" height="1" fill="#a02010"/><rect x="127" y="64" width="513" height="1" fill="#500800"/>
<rect x="127" y="134" width="29" height="334" fill="url(#dotg)"/>
<path d="M127 128 H157 V468" stroke="#1a1af0" stroke-width="2" fill="none"/><path d="M127 133 H160.5 V468" stroke="#1e1eff" stroke-width="2" fill="none"/>
<rect x="211" y="135" width="200" height="200" fill="url(#dred)"/>
<rect x="209.5" y="133.5" width="203" height="203" fill="none" stroke="#f0ea40" stroke-width="3" stroke-dasharray="2.5 1.1"/>
<rect x="222" y="146" width="178" height="178" fill="url(#cell)"/>
<rect x="222.5" y="146.5" width="177" height="177" fill="none" stroke="#c0a0a0" stroke-width="1"/>
<rect x="231.5" y="155.5" width="159" height="158" fill="none" stroke="#58d070" stroke-width="1"/>
<g fill="#ec7e1c"><rect x="233.00" y="157.00" width="8" height="8"/><rect x="233.00" y="173.33" width="8" height="8"/><rect x="233.00" y="189.67" width="8" height="8"/><rect x="233.00" y="206.00" width="8" height="8"/><rect x="233.00" y="222.33" width="8" height="8"/><rect x="233.00" y="238.67" width="8" height="8"/><rect x="233.00" y="255.00" width="8" height="8"/><rect x="233.00" y="271.33" width="8" height="8"/><rect x="233.00" y="287.67" width="8" height="8"/><rect x="233.00" y="304.00" width="8" height="8"/><rect x="249.33" y="157.00" width="8" height="8"/><rect x="249.33" y="173.33" width="8" height="8"/><rect x="249.33" y="189.67" width="8" height="8"/><rect x="249.33" y="206.00" width="8" height="8"/><rect x="249.33" y="222.33" width="8" height="8"/><rect x="249.33" y="238.67" width="8" height="8"/><rect x="249.33" y="255.00" width="8" height="8"/><rect x="249.33" y="271.33" width="8" height="8"/><rect x="249.33" y="287.67" width="8" height="8"/><rect x="249.33" y="304.00" width="8" height="8"/><rect x="265.67" y="157.00" width="8" height="8"/><rect x="265.67" y="173.33" width="8" height="8"/><rect x="265.67" y="189.67" width="8" height="8"/><rect x="265.67" y="206.00" width="8" height="8"/><rect x="265.67" y="222.33" width="8" height="8"/><rect x="265.67" y="238.67" width="8" height="8"/><rect x="265.67" y="255.00" width="8" height="8"/><rect x="265.67" y="271.33" width="8" height="8"/><rect x="265.67" y="287.67" width="8" height="8"/><rect x="265.67" y="304.00" width="8" height="8"/><rect x="282.00" y="157.00" width="8" height="8"/><rect x="282.00" y="173.33" width="8" height="8"/><rect x="282.00" y="189.67" width="8" height="8"/><rect x="282.00" y="206.00" width="8" height="8"/><rect x="282.00" y="222.33" width="8" height="8"/><rect x="282.00" y="238.67" width="8" height="8"/><rect x="282.00" y="255.00" width="8" height="8"/><rect x="282.00" y="271.33" width="8" height="8"/><rect x="282.00" y="287.67" width="8" height="8"/><rect x="282.00" y="304.00" width="8" height="8"/><rect x="298.33" y="157.00" width="8" height="8"/><rect x="298.33" y="173.33" width="8" height="8"/><rect x="298.33" y="189.67" width="8" height="8"/><rect x="298.33" y="206.00" width="8" height="8"/><rect x="298.33" y="222.33" width="8" height="8"/><rect x="298.33" y="238.67" width="8" height="8"/><rect x="298.33" y="255.00" width="8" height="8"/><rect x="298.33" y="271.33" width="8" height="8"/><rect x="298.33" y="287.67" width="8" height="8"/><rect x="298.33" y="304.00" width="8" height="8"/><rect x="314.67" y="157.00" width="8" height="8"/><rect x="314.67" y="173.33" width="8" height="8"/><rect x="314.67" y="189.67" width="8" height="8"/><rect x="314.67" y="206.00" width="8" height="8"/><rect x="314.67" y="222.33" width="8" height="8"/><rect x="314.67" y="238.67" width="8" height="8"/><rect x="314.67" y="255.00" width="8" height="8"/><rect x="314.67" y="271.33" width="8" height="8"/><rect x="314.67" y="287.67" width="8" height="8"/><rect x="314.67" y="304.00" width="8" height="8"/><rect x="331.00" y="157.00" width="8" height="8"/><rect x="331.00" y="173.33" width="8" height="8"/><rect x="331.00" y="189.67" width="8" height="8"/><rect x="331.00" y="206.00" width="8" height="8"/><rect x="331.00" y="222.33" width="8" height="8"/><rect x="331.00" y="238.67" width="8" height="8"/><rect x="331.00" y="255.00" width="8" height="8"/><rect x="331.00" y="271.33" width="8" height="8"/><rect x="331.00" y="287.67" width="8" height="8"/><rect x="331.00" y="304.00" width="8" height="8"/><rect x="347.33" y="157.00" width="8" height="8"/><rect x="347.33" y="173.33" width="8" height="8"/><rect x="347.33" y="189.67" width="8" height="8"/><rect x="347.33" y="206.00" width="8" height="8"/><rect x="347.33" y="222.33" width="8" height="8"/><rect x="347.33" y="238.67" width="8" height="8"/><rect x="347.33" y="255.00" width="8" height="8"/><rect x="347.33" y="271.33" width="8" height="8"/><rect x="347.33" y="287.67" width="8" height="8"/><rect x="347.33" y="304.00" width="8" height="8"/><rect x="363.67" y="157.00" width="8" height="8"/><rect x="363.67" y="173.33" width="8" height="8"/><rect x="363.67" y="189.67" width="8" height="8"/><rect x="363.67" y="206.00" width="8" height="8"/><rect x="363.67" y="222.33" width="8" height="8"/><rect x="363.67" y="238.67" width="8" height="8"/><rect x="363.67" y="255.00" width="8" height="8"/><rect x="363.67" y="271.33" width="8" height="8"/><rect x="363.67" y="287.67" width="8" height="8"/><rect x="363.67" y="304.00" width="8" height="8"/><rect x="380.00" y="157.00" width="8" height="8"/><rect x="380.00" y="173.33" width="8" height="8"/><rect x="380.00" y="189.67" width="8" height="8"/><rect x="380.00" y="206.00" width="8" height="8"/><rect x="380.00" y="222.33" width="8" height="8"/><rect x="380.00" y="238.67" width="8" height="8"/><rect x="380.00" y="255.00" width="8" height="8"/><rect x="380.00" y="271.33" width="8" height="8"/><rect x="380.00" y="287.67" width="8" height="8"/><rect x="380.00" y="304.00" width="8" height="8"/></g><g><path d="M234.00 157.00 l6.5 8.5" stroke="#d8b040" stroke-width="0.9" opacity="0.7"/><path d="M234.00 173.33 l6.5 8.5" stroke="#d8b040" stroke-width="0.9" opacity="0.7"/><path d="M234.00 189.67 l6.5 8.5" stroke="#d8b040" stroke-width="0.9" opacity="0.7"/><path d="M234.00 206.00 l6.5 8.5" stroke="#d8b040" stroke-width="0.9" opacity="0.7"/><path d="M234.00 222.33 l6.5 8.5" stroke="#d8b040" stroke-width="0.9" opacity="0.7"/><path d="M234.00 238.67 l6.5 8.5" stroke="#d8b040" stroke-width="0.9" opacity="0.7"/><path d="M234.00 255.00 l6.5 8.5" stroke="#d8b040" stroke-width="0.9" opacity="0.7"/><path d="M234.00 271.33 l6.5 8.5" stroke="#d8b040" stroke-width="0.9" opacity="0.7"/><path d="M234.00 287.67 l6.5 8.5" stroke="#d8b040" stroke-width="0.9" opacity="0.7"/><path d="M234.00 304.00 l6.5 8.5" stroke="#d8b040" stroke-width="0.9" opacity="0.7"/><path d="M250.33 157.00 l6.5 8.5" stroke="#d8b040" stroke-width="0.9" opacity="0.7"/><path d="M250.33 173.33 l6.5 8.5" stroke="#d8b040" stroke-width="0.9" opacity="0.7"/><path d="M250.33 189.67 l6.5 8.5" stroke="#d8b040" stroke-width="0.9" opacity="0.7"/><path d="M250.33 206.00 l6.5 8.5" stroke="#d8b040" stroke-width="0.9" opacity="0.7"/><path d="M250.33 222.33 l6.5 8.5" stroke="#d8b040" stroke-width="0.9" opacity="0.7"/><path d="M250.33 238.67 l6.5 8.5" stroke="#d8b040" stroke-width="0.9" opacity="0.7"/><path d="M250.33 255.00 l6.5 8.5" stroke="#d8b040" stroke-width="0.9" opacity="0.7"/><path d="M250.33 271.33 l6.5 8.5" stroke="#d8b040" stroke-width="0.9" opacity="0.7"/><path d="M250.33 287.67 l6.5 8.5" stroke="#d8b040" stroke-width="0.9" opacity="0.7"/><path d="M250.33 304.00 l6.5 8.5" stroke="#d8b040" stroke-width="0.9" opacity="0.7"/><path d="M266.67 157.00 l6.5 8.5" stroke="#d8b040" stroke-width="0.9" opacity="0.7"/><path d="M266.67 173.33 l6.5 8.5" stroke="#d8b040" stroke-width="0.9" opacity="0.7"/><path d="M266.67 189.67 l6.5 8.5" stroke="#d8b040" stroke-width="0.9" opacity="0.7"/><path d="M266.67 206.00 l6.5 8.5" stroke="#d8b040" stroke-width="0.9" opacity="0.7"/><path d="M266.67 222.33 l6.5 8.5" stroke="#d8b040" stroke-width="0.9" opacity="0.7"/><path d="M266.67 238.67 l6.5 8.5" stroke="#d8b040" stroke-width="0.9" opacity="0.7"/><path d="M266.67 255.00 l6.5 8.5" stroke="#d8b040" stroke-width="0.9" opacity="0.7"/><path d="M266.67 271.33 l6.5 8.5" stroke="#d8b040" stroke-width="0.9" opacity="0.7"/><path d="M266.67 287.67 l6.5 8.5" stroke="#d8b040" stroke-width="0.9" opacity="0.7"/><path d="M266.67 304.00 l6.5 8.5" stroke="#d8b040" stroke-width="0.9" opacity="0.7"/><path d="M283.00 157.00 l6.5 8.5" stroke="#d8b040" stroke-width="0.9" opacity="0.7"/><path d="M283.00 173.33 l6.5 8.5" stroke="#d8b040" stroke-width="0.9" opacity="0.7"/><path d="M283.00 189.67 l6.5 8.5" stroke="#d8b040" stroke-width="0.9" opacity="0.7"/><path d="M283.00 206.00 l6.5 8.5" stroke="#d8b040" stroke-width="0.9" opacity="0.7"/><path d="M283.00 222.33 l6.5 8.5" stroke="#d8b040" stroke-width="0.9" opacity="0.7"/><path d="M283.00 238.67 l6.5 8.5" stroke="#d8b040" stroke-width="0.9" opacity="0.7"/><path d="M283.00 255.00 l6.5 8.5" stroke="#d8b040" stroke-width="0.9" opacity="0.7"/><path d="M283.00 271.33 l6.5 8.5" stroke="#d8b040" stroke-width="0.9" opacity="0.7"/><path d="M283.00 287.67 l6.5 8.5" stroke="#d8b040" stroke-width="0.9" opacity="0.7"/><path d="M283.00 304.00 l6.5 8.5" stroke="#d8b040" stroke-width="0.9" opacity="0.7"/><path d="M299.33 157.00 l6.5 8.5" stroke="#d8b040" stroke-width="0.9" opacity="0.7"/><path d="M299.33 173.33 l6.5 8.5" stroke="#d8b040" stroke-width="0.9" opacity="0.7"/><path d="M299.33 189.67 l6.5 8.5" stroke="#d8b040" stroke-width="0.9" opacity="0.7"/><path d="M299.33 206.00 l6.5 8.5" stroke="#d8b040" stroke-width="0.9" opacity="0.7"/><path d="M299.33 222.33 l6.5 8.5" stroke="#d8b040" stroke-width="0.9" opacity="0.7"/><path d="M299.33 238.67 l6.5 8.5" stroke="#d8b040" stroke-width="0.9" opacity="0.7"/><path d="M299.33 255.00 l6.5 8.5" stroke="#d8b040" stroke-width="0.9" opacity="0.7"/><path d="M299.33 271.33 l6.5 8.5" stroke="#d8b040" stroke-width="0.9" opacity="0.7"/><path d="M299.33 287.67 l6.5 8.5" stroke="#d8b040" stroke-width="0.9" opacity="0.7"/><path d="M299.33 304.00 l6.5 8.5" stroke="#d8b040" stroke-width="0.9" opacity="0.7"/><path d="M315.67 157.00 l6.5 8.5" stroke="#d8b040" stroke-width="0.9" opacity="0.7"/><path d="M315.67 173.33 l6.5 8.5" stroke="#d8b040" stroke-width="0.9" opacity="0.7"/><path d="M315.67 189.67 l6.5 8.5" stroke="#d8b040" stroke-width="0.9" opacity="0.7"/><path d="M315.67 206.00 l6.5 8.5" stroke="#d8b040" stroke-width="0.9" opacity="0.7"/><path d="M315.67 222.33 l6.5 8.5" stroke="#d8b040" stroke-width="0.9" opacity="0.7"/><path d="M315.67 238.67 l6.5 8.5" stroke="#d8b040" stroke-width="0.9" opacity="0.7"/><path d="M315.67 255.00 l6.5 8.5" stroke="#d8b040" stroke-width="0.9" opacity="0.7"/><path d="M315.67 271.33 l6.5 8.5" stroke="#d8b040" stroke-width="0.9" opacity="0.7"/><path d="M315.67 287.67 l6.5 8.5" stroke="#d8b040" stroke-width="0.9" opacity="0.7"/><path d="M315.67 304.00 l6.5 8.5" stroke="#d8b040" stroke-width="0.9" opacity="0.7"/><path d="M332.00 157.00 l6.5 8.5" stroke="#d8b040" stroke-width="0.9" opacity="0.7"/><path d="M332.00 173.33 l6.5 8.5" stroke="#d8b040" stroke-width="0.9" opacity="0.7"/><path d="M332.00 189.67 l6.5 8.5" stroke="#d8b040" stroke-width="0.9" opacity="0.7"/><path d="M332.00 206.00 l6.5 8.5" stroke="#d8b040" stroke-width="0.9" opacity="0.7"/><path d="M332.00 222.33 l6.5 8.5" stroke="#d8b040" stroke-width="0.9" opacity="0.7"/><path d="M332.00 238.67 l6.5 8.5" stroke="#d8b040" stroke-width="0.9" opacity="0.7"/><path d="M332.00 255.00 l6.5 8.5" stroke="#d8b040" stroke-width="0.9" opacity="0.7"/><path d="M332.00 271.33 l6.5 8.5" stroke="#d8b040" stroke-width="0.9" opacity="0.7"/><path d="M332.00 287.67 l6.5 8.5" stroke="#d8b040" stroke-width="0.9" opacity="0.7"/><path d="M332.00 304.00 l6.5 8.5" stroke="#d8b040" stroke-width="0.9" opacity="0.7"/><path d="M348.33 157.00 l6.5 8.5" stroke="#d8b040" stroke-width="0.9" opacity="0.7"/><path d="M348.33 173.33 l6.5 8.5" stroke="#d8b040" stroke-width="0.9" opacity="0.7"/><path d="M348.33 189.67 l6.5 8.5" stroke="#d8b040" stroke-width="0.9" opacity="0.7"/><path d="M348.33 206.00 l6.5 8.5" stroke="#d8b040" stroke-width="0.9" opacity="0.7"/><path d="M348.33 222.33 l6.5 8.5" stroke="#d8b040" stroke-width="0.9" opacity="0.7"/><path d="M348.33 238.67 l6.5 8.5" stroke="#d8b040" stroke-width="0.9" opacity="0.7"/><path d="M348.33 255.00 l6.5 8.5" stroke="#d8b040" stroke-width="0.9" opacity="0.7"/><path d="M348.33 271.33 l6.5 8.5" stroke="#d8b040" stroke-width="0.9" opacity="0.7"/><path d="M348.33 287.67 l6.5 8.5" stroke="#d8b040" stroke-width="0.9" opacity="0.7"/><path d="M348.33 304.00 l6.5 8.5" stroke="#d8b040" stroke-width="0.9" opacity="0.7"/><path d="M364.67 157.00 l6.5 8.5" stroke="#d8b040" stroke-width="0.9" opacity="0.7"/><path d="M364.67 173.33 l6.5 8.5" stroke="#d8b040" stroke-width="0.9" opacity="0.7"/><path d="M364.67 189.67 l6.5 8.5" stroke="#d8b040" stroke-width="0.9" opacity="0.7"/><path d="M364.67 206.00 l6.5 8.5" stroke="#d8b040" stroke-width="0.9" opacity="0.7"/><path d="M364.67 222.33 l6.5 8.5" stroke="#d8b040" stroke-width="0.9" opacity="0.7"/><path d="M364.67 238.67 l6.5 8.5" stroke="#d8b040" stroke-width="0.9" opacity="0.7"/><path d="M364.67 255.00 l6.5 8.5" stroke="#d8b040" stroke-width="0.9" opacity="0.7"/><path d="M364.67 271.33 l6.5 8.5" stroke="#d8b040" stroke-width="0.9" opacity="0.7"/><path d="M364.67 287.67 l6.5 8.5" stroke="#d8b040" stroke-width="0.9" opacity="0.7"/><path d="M364.67 304.00 l6.5 8.5" stroke="#d8b040" stroke-width="0.9" opacity="0.7"/><path d="M381.00 157.00 l6.5 8.5" stroke="#d8b040" stroke-width="0.9" opacity="0.7"/><path d="M381.00 173.33 l6.5 8.5" stroke="#d8b040" stroke-width="0.9" opacity="0.7"/><path d="M381.00 189.67 l6.5 8.5" stroke="#d8b040" stroke-width="0.9" opacity="0.7"/><path d="M381.00 206.00 l6.5 8.5" stroke="#d8b040" stroke-width="0.9" opacity="0.7"/><path d="M381.00 222.33 l6.5 8.5" stroke="#d8b040" stroke-width="0.9" opacity="0.7"/><path d="M381.00 238.67 l6.5 8.5" stroke="#d8b040" stroke-width="0.9" opacity="0.7"/><path d="M381.00 255.00 l6.5 8.5" stroke="#d8b040" stroke-width="0.9" opacity="0.7"/><path d="M381.00 271.33 l6.5 8.5" stroke="#d8b040" stroke-width="0.9" opacity="0.7"/><path d="M381.00 287.67 l6.5 8.5" stroke="#d8b040" stroke-width="0.9" opacity="0.7"/><path d="M381.00 304.00 l6.5 8.5" stroke="#d8b040" stroke-width="0.9" opacity="0.7"/></g><rect x="310" y="215" width="3" height="3" fill="#c8e040"/><path d="M310.5 219.5V227.5L312.5 225.5L314 228.5L315.3 227.8L314 225H316.5Z" fill="#000" stroke="#fff" stroke-width="0.8"/>
<rect x="217" y="404" width="188" height="17" fill="#1a0000"/>
<path d="M217 405.5 H405" stroke="#902020" stroke-width="1" stroke-dasharray="2 1"/><path d="M217 409.5 H405" stroke="#701818" stroke-width="1" stroke-dasharray="2 2"/>
<g fill="#000078"><rect x="220.00" y="411" width="4" height="2.5"/><rect x="220.00" y="416.5" width="4" height="2.5"/><rect x="231.88" y="411" width="4" height="2.5"/><rect x="231.88" y="416.5" width="4" height="2.5"/><rect x="243.76" y="411" width="4" height="2.5"/><rect x="243.76" y="416.5" width="4" height="2.5"/><rect x="255.64" y="411" width="4" height="2.5"/><rect x="255.64" y="416.5" width="4" height="2.5"/><rect x="267.52" y="411" width="4" height="2.5"/><rect x="267.52" y="416.5" width="4" height="2.5"/><rect x="279.40" y="411" width="4" height="2.5"/><rect x="279.40" y="416.5" width="4" height="2.5"/><rect x="291.28" y="411" width="4" height="2.5"/><rect x="291.28" y="416.5" width="4" height="2.5"/><rect x="303.16" y="411" width="4" height="2.5"/><rect x="303.16" y="416.5" width="4" height="2.5"/><rect x="315.04" y="411" width="4" height="2.5"/><rect x="315.04" y="416.5" width="4" height="2.5"/><rect x="326.92" y="411" width="4" height="2.5"/><rect x="326.92" y="416.5" width="4" height="2.5"/><rect x="338.80" y="411" width="4" height="2.5"/><rect x="338.80" y="416.5" width="4" height="2.5"/><rect x="350.68" y="411" width="4" height="2.5"/><rect x="350.68" y="416.5" width="4" height="2.5"/><rect x="362.56" y="411" width="4" height="2.5"/><rect x="362.56" y="416.5" width="4" height="2.5"/><rect x="374.44" y="411" width="4" height="2.5"/><rect x="374.44" y="416.5" width="4" height="2.5"/><rect x="386.32" y="411" width="4" height="2.5"/><rect x="386.32" y="416.5" width="4" height="2.5"/><rect x="398.20" y="411" width="4" height="2.5"/><rect x="398.20" y="416.5" width="4" height="2.5"/></g><path d="M218.00 421 L229.00 405" stroke="#c8c8c8" stroke-width="0.7" stroke-dasharray="1.5 1"/><path d="M229.88 421 L240.88 405" stroke="#c8c8c8" stroke-width="0.7" stroke-dasharray="1.5 1"/><path d="M241.76 421 L252.76 405" stroke="#c8c8c8" stroke-width="0.7" stroke-dasharray="1.5 1"/><path d="M253.64 421 L264.64 405" stroke="#c8c8c8" stroke-width="0.7" stroke-dasharray="1.5 1"/><path d="M265.52 421 L276.52 405" stroke="#c8c8c8" stroke-width="0.7" stroke-dasharray="1.5 1"/><path d="M277.40 421 L288.40 405" stroke="#c8c8c8" stroke-width="0.7" stroke-dasharray="1.5 1"/><path d="M289.28 421 L300.28 405" stroke="#c8c8c8" stroke-width="0.7" stroke-dasharray="1.5 1"/><path d="M301.16 421 L312.16 405" stroke="#c8c8c8" stroke-width="0.7" stroke-dasharray="1.5 1"/><path d="M313.04 421 L324.04 405" stroke="#c8c8c8" stroke-width="0.7" stroke-dasharray="1.5 1"/><path d="M324.92 421 L335.92 405" stroke="#c8c8c8" stroke-width="0.7" stroke-dasharray="1.5 1"/><path d="M336.80 421 L347.80 405" stroke="#c8c8c8" stroke-width="0.7" stroke-dasharray="1.5 1"/><path d="M348.68 421 L359.68 405" stroke="#c8c8c8" stroke-width="0.7" stroke-dasharray="1.5 1"/><path d="M360.56 421 L371.56 405" stroke="#c8c8c8" stroke-width="0.7" stroke-dasharray="1.5 1"/><path d="M372.44 421 L383.44 405" stroke="#c8c8c8" stroke-width="0.7" stroke-dasharray="1.5 1"/><path d="M384.32 421 L395.32 405" stroke="#c8c8c8" stroke-width="0.7" stroke-dasharray="1.5 1"/><path d="M396.20 421 L407.20 405" stroke="#c8c8c8" stroke-width="0.7" stroke-dasharray="1.5 1"/><g fill="#ececec"><rect x="224.00" y="411" width="8" height="8.5"/><rect x="235.88" y="411" width="8" height="8.5"/><rect x="247.76" y="411" width="8" height="8.5"/><rect x="259.64" y="411" width="8" height="8.5"/><rect x="271.52" y="411" width="8" height="8.5"/><rect x="283.40" y="411" width="8" height="8.5"/><rect x="295.28" y="411" width="8" height="8.5"/><rect x="307.16" y="411" width="8" height="8.5"/><rect x="319.04" y="411" width="8" height="8.5"/><rect x="330.92" y="411" width="8" height="8.5"/><rect x="342.80" y="411" width="8" height="8.5"/><rect x="354.68" y="411" width="8" height="8.5"/><rect x="366.56" y="411" width="8" height="8.5"/><rect x="378.44" y="411" width="8" height="8.5"/><rect x="390.32" y="411" width="8" height="8.5"/></g>
<rect x="216.5" y="403.5" width="189" height="70" fill="none" stroke="#d8b0a0" stroke-width="1"/>
<rect x="214.5" y="414.5" width="193" height="60" fill="none" stroke="#e0d040" stroke-width="1"/>
<rect x="218" y="421" width="187" height="47" fill="url(#grn)"/><rect x="218" y="421" width="187" height="47" fill="url(#gstr)"/><rect x="218.5" y="421.5" width="186" height="50" fill="none" stroke="#50d860" stroke-width="1"/><path d="M222.5 421V468" stroke="#60e070" stroke-width="1"/>
</svg>

<!-- BOTTOM -->

<!-- OBJECTS -->
<div class="a" style="left:0;top:384px;width:123px;height:4px;background:#e4e4e4"></div>
<div class="hdr" style="left:0;top:388px;width:123px;height:13px"></div>
<span class="t" style="left:8.5px;top:390px;font-size:8.2px;font-weight:bold;color:#333;letter-spacing:0.1px">Objects</span>
<div class="hb" style="left:102px;top:389px"><svg width="7" height="8" style="position:absolute;left:0;top:0"><path d="M2 1.5h4v4M1 3.5h3.5v4h-3.5z" stroke="#555" fill="none" stroke-width="1"/></svg></div>
<div class="hb" style="left:112px;top:389px"><svg width="7" height="8" style="position:absolute;left:0;top:0"><path d="M1 1.5L6 6.5M6 1.5L1 6.5" stroke="#444" stroke-width="1.1"/></svg></div>
<div class="a" style="left:0;top:402px;width:122px;height:50px;background:#fff;border-bottom:2px solid #333"></div>
<div class="a" style="left:0;top:402px;width:110px;height:12px;background:linear-gradient(#f0f0f0,#cfcfcf);border-bottom:1px solid #b0b0b0"></div>
<span class="t" style="left:26px;top:405px;font-size:8.2px;font-weight:bold;color:#333">Objects</span>
<div class="a" style="left:78px;top:402px;width:1px;height:12px;background:#c0c0c0"></div>
<span class="t lt" style="left:84px;top:405px;color:#555">V</span>
<div class="a" style="left:94px;top:402px;width:1px;height:12px;background:#c0c0c0"></div>
<span class="t lt" style="left:100px;top:405px;color:#555">S</span>
<div class="a" style="left:110px;top:402px;width:11px;height:49px;background:#9a9a9a"></div>
<div class="a" style="left:110px;top:402px;width:11px;height:12px;background:linear-gradient(#f4f4f4,#dcdcdc);border:1px solid #c8c8c8"></div>
<svg class="a" style="left:112px;top:405px" width="8" height="6"><path d="M0.5 5H7.5L4 1Z" fill="#fff" stroke="#b0b0b0" stroke-width="0.7"/></svg>
<div class="a" style="left:111px;top:414px;width:9px;height:22px;background:linear-gradient(90deg,#e8e8e8,#d0d0d0);border:1px solid #b8b8b8;border-radius:4px"></div>
<div class="a" style="left:113px;top:422px;width:5px;height:1px;background:#999"></div>
<div class="a" style="left:113px;top:425px;width:5px;height:1px;background:#999"></div>
<div class="a" style="left:110px;top:439px;width:11px;height:12px;background:linear-gradient(#e8e8e8,#d0d0d0);border:1px solid #c0c0c0"></div>
<svg class="a" style="left:112px;top:442px" width="8" height="6"><path d="M0.5 1H7.5L4 5Z" fill="#fff" stroke="#b0b0b0" stroke-width="0.7"/></svg>
<div class="a" style="left:8px;top:414px;height:38px;border-left:1px dashed #999"></div>
<span class="t lt" style="left:17px;top:417px">Instances</span><div class="a" style="left:9px;top:420px;width:5px;border-top:1px dashed #999"></div><div class="ck" style="left:84px;top:417px"><svg width="9" height="9" viewBox="0 0 9 9"><path d="M1.6 4.6L3.6 7.2L7.8 1.6" stroke="#c80000" stroke-width="1.7" fill="none"/></svg></div><div class="ck" style="left:100px;top:417px"><svg width="9" height="9" viewBox="0 0 9 9"><path d="M1.6 4.6L3.6 7.2L7.8 1.6" stroke="#c80000" stroke-width="1.7" fill="none"/></svg></div><span class="t lt" style="left:17px;top:429px">Pins</span><div class="a" style="left:9px;top:432px;width:5px;border-top:1px dashed #999"></div><div class="ck" style="left:84px;top:429px"><svg width="9" height="9" viewBox="0 0 9 9"><path d="M1.6 4.6L3.6 7.2L7.8 1.6" stroke="#c80000" stroke-width="1.7" fill="none"/></svg></div><div class="ck" style="left:100px;top:429px"><svg width="9" height="9" viewBox="0 0 9 9"><path d="M1.6 4.6L3.6 7.2L7.8 1.6" stroke="#c80000" stroke-width="1.7" fill="none"/></svg></div><span class="t lt" style="left:17px;top:441px">Vias</span><div class="a" style="left:9px;top:444px;width:5px;border-top:1px dashed #999"></div><div class="ck" style="left:84px;top:441px"><svg width="9" height="9" viewBox="0 0 9 9"><path d="M1.6 4.6L3.6 7.2L7.8 1.6" stroke="#c80000" stroke-width="1.7" fill="none"/></svg></div><div class="ck" style="left:100px;top:441px"><svg width="9" height="9" viewBox="0 0 9 9"><path d="M1.6 4.6L3.6 7.2L7.8 1.6" stroke="#c80000" stroke-width="1.7" fill="none"/></svg></div>
<!-- tabs -->
<div class="a" style="left:0;top:453px;width:123px;height:15px;background:#ececec"></div>
<span class="t" style="left:5px;top:458px;font-size:8.2px;color:#444">Objects</span>
<div class="a" style="left:37px;top:453px;width:31px;height:15px;background:#d4d4d4"></div>
<span class="t" style="left:44px;top:456px;font-size:8.2px;color:#444">Grids</span>

<div class="a" style="left:0;top:468px;width:640px;height:21px;background:linear-gradient(#f2f2f2,#e2e2e2 45%,#cfcfcf);border-bottom:1px solid #c4c4c4"></div>
<div class="grip" style="left:2px;top:473px;height:12px"></div><div class="grip" style="left:4px;top:473px;height:12px"></div>
<span class="t" style="left:9px;top:475px;font-size:8px;color:#3a3a3a">PreSel:</span>
<span class="t" style="left:41px;top:475px;font-size:8px;color:#3a3a3a">Inst</span>
<span class="t" style="left:63px;top:475px;font-size:8px;color:#3a3a3a">Name(I1)</span>
<span class="t" style="left:104.5px;top:475px;font-size:8px;color:#3a3a3a">CellName(mimcap)</span>
<div class="a" style="left:0;top:489px;width:640px;height:13px;background:linear-gradient(#e6e6e6,#d2d2d2)"></div>
<div class="grip" style="left:1px;top:492px;height:7px;background:#b0b0b0"></div><div class="grip" style="left:3px;top:492px;height:7px;background:#b0b0b0"></div><div class="grip" style="left:5px;top:492px;height:7px;background:#b0b0b0"></div>
<span class="t" style="left:7px;top:491.5px;font-size:8px;color:#3a3a3a">mouse L: mouseSingleSelectPt()</span>
<span class="t" style="left:226.5px;top:491.5px;font-size:8px;color:#3a3a3a">M: hiZoomAbsoluteScale(hiGetCurrentWindow() 0.9)</span>
<span class="t" style="left:555px;top:491.5px;font-size:8px;color:#3a3a3a">R: _lxHiMousePopUp()</span>
<div class="a" style="left:0;top:502px;width:640px;height:15px;background:#f2f2f2"></div>
<div class="a" style="left:0;top:502px;width:18px;height:15px;background:#f4d4dc;border-right:1px solid #909090"></div>
<span class="t" style="left:1px;top:506px;font-size:8px;color:#555">1(2)</span>
<span class="t" style="left:26px;top:506px;font-size:8px;color:#444">&gt;</span>
<div class="a" style="left:602px;top:503px;width:1px;height:13px;background:#b0b0b0"></div>
<span class="t" style="left:607.5px;top:506px;font-size:8px;color:#555">Cmd:</span>
<div class="a" style="left:633px;top:505px;width:5px;height:11px;background:#8a8a8a"></div>
<div class="a" style="left:639px;top:489px;width:1px;height:28px;background:#999"></div>
</body></html>
